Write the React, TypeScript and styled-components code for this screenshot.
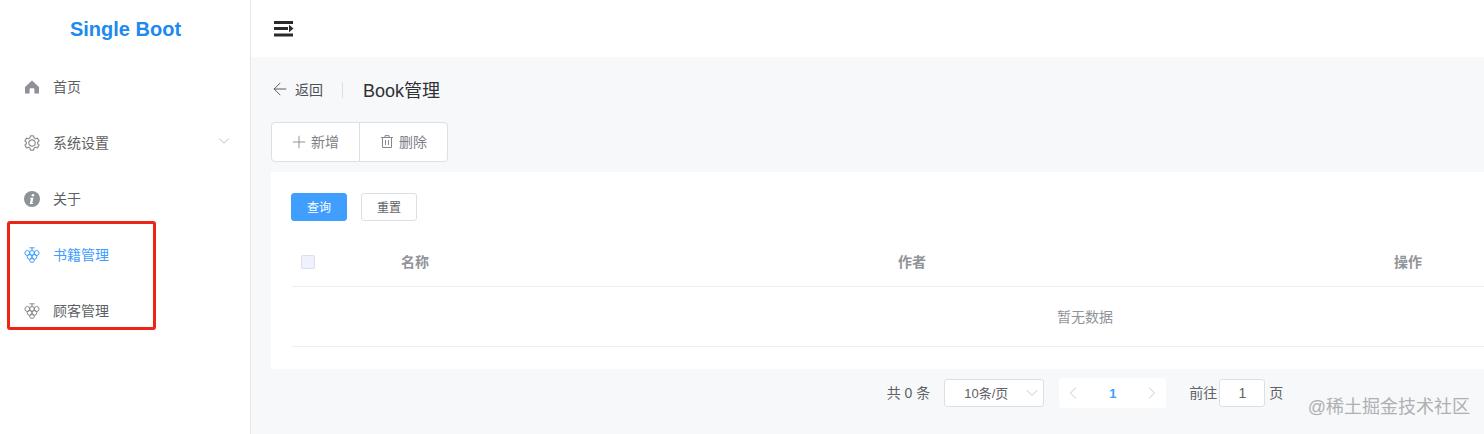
import React from 'react';
import styled, { createGlobalStyle } from 'styled-components';
import { ArrowLeft, ChevronDown, ChevronLeft, ChevronRight, Plus } from 'lucide-react';

const FONT = '"Liberation Sans", "Noto Sans CJK SC", sans-serif';

const GlobalStyle = createGlobalStyle`
  html, body {
    margin: 0;
    padding: 0;
    height: 434px;
    overflow: hidden;
    background: #fff;
    font-family: ${FONT};
  }
  * {
    box-sizing: border-box;
  }
`;

const Shell = styled.div`
  position: relative;
  display: flex;
  width: 1484px;
  height: 434px;
  overflow: hidden;
`;

const Sidebar = styled.aside`
  flex: none;
  width: 251px;
  height: 100%;
  background: #fff;
  border-right: 1px solid #e6e6e6;
`;

const Logo = styled.div`
  height: 59px;
  padding-left: 1px;
  display: flex;
  align-items: center;
  justify-content: center;
  color: #2089f0;
  font-size: 20px;
  font-weight: 700;
`;

const MenuItem = styled.div<{ $active?: boolean }>`
  height: 56px;
  padding: 0 20px 0 24px;
  display: flex;
  align-items: center;
  gap: 13px;
  font-size: 14px;
  color: ${props => (props.$active ? '#409eff' : '#5c5f64')};
`;

const MenuLabel = styled.span`
  flex: 1;
  padding-bottom: 2px;
`;

const MenuIcon = styled.svg`
  flex: none;
  width: 16px;
  height: 16px;
  display: block;
`;

const MenuArrow = styled(ChevronDown)`
  flex: none;
  margin: -5px -3px 0 0;
  color: #a9adb3;
`;

const Highlight = styled.div`
  position: absolute;
  left: 7px;
  top: 221px;
  width: 149px;
  height: 109px;
  border: 3px solid #ee2419;
  border-radius: 3px;
`;

const Main = styled.main`
  flex: 1;
  min-width: 0;
  display: flex;
  flex-direction: column;
  overflow: hidden;
  background: #f6f8f9;
`;

const TopBar = styled.header`
  flex: none;
  height: 57px;
  padding-left: 23px;
  display: flex;
  align-items: center;
  background: #fff;
`;

const Content = styled.div`
  width: 1648px;
  padding: 0 0 0 20px;
`;

const PageHeader = styled.div`
  height: 65px;
  margin-left: -1px;
  padding-bottom: 2px;
  display: flex;
  align-items: center;
`;

const BackLink = styled.div`
  display: flex;
  align-items: center;
  gap: 5px;
  font-size: 14px;
  color: #4d5056;
`;

const HeaderDivider = styled.span`
  width: 1px;
  height: 16px;
  margin: 2px 20px 0 19px;
  background: #dcdfe6;
`;

const PageTitle = styled.h1`
  margin: 0;
  font-size: 18px;
  font-weight: 400;
  color: #303133;
`;

const ButtonGroup = styled.div`
  display: inline-flex;
  vertical-align: top;
  height: 40px;
  background: #fff;
  border: 1px solid #dcdfe6;
  border-radius: 4px;
`;

const ToolButton = styled.div`
  height: 100%;
  padding: 0 20px 2px 21px;
  display: flex;
  align-items: center;
  gap: 6px;
  font-size: 14px;
  color: #7d8086;

  & + & {
    border-left: 1px solid #dcdfe6;
  }
`;

const PlusIcon = styled(Plus)`
  margin: 2px -4px 0 -4px;
`;

const ToolbarRow = styled.div`
  height: 50px;
`;

const Card = styled.section`
  width: 1628px;
  height: 197px;
  padding: 21px 21px 0;
  background: #fff;
`;

const SearchRow = styled.div`
  display: flex;
  gap: 14px;
  height: 47px;
  margin-left: -1px;
`;

const SmallButton = styled.div<{ $primary?: boolean }>`
  width: 56px;
  height: 28px;
  padding-bottom: 2px;
  display: flex;
  align-items: center;
  justify-content: center;
  border-radius: 3px;
  font-size: 12px;
  color: ${props => (props.$primary ? '#fff' : '#606266')};
  background: ${props => (props.$primary ? '#409eff' : '#fff')};
  border: 1px solid ${props => (props.$primary ? '#409eff' : '#dcdfe6')};
`;

const TableHead = styled.div`
  height: 47px;
  padding-bottom: 5px;
  display: grid;
  grid-template-columns: 109px 497px 496px 1fr;
  align-items: center;
  font-size: 14px;
  font-weight: 700;
  color: #909399;
  border-bottom: 1px solid #ebeef5;
`;

const CheckCell = styled.div`
  padding-left: 9px;
`;

const CheckBox = styled.span`
  display: block;
  width: 14px;
  height: 14px;
  margin-top: 3px;
  background: #edf2fc;
  border: 1px solid #dcdfe6;
  border-radius: 2px;
`;

const EmptyRow = styled.div`
  height: 60px;
  padding-bottom: 2px;
  display: flex;
  align-items: center;
  justify-content: center;
  font-size: 14px;
  font-weight: 400;
  color: #909399;
  border-bottom: 1px solid #ebeef5;
`;

const Pagination = styled.div`
  width: 1628px;
  height: 48px;
  display: flex;
  align-items: center;
  justify-content: center;
  font-size: 14px;
  color: #606266;
`;

const PagerText = styled.span`
  padding-bottom: 2px;
`;

const Total = styled(PagerText)`
  margin-right: 14px;
`;

const SizeSelect = styled.div`
  width: 100px;
  height: 28px;
  padding: 0 1px 0 19px;
  display: flex;
  align-items: center;
  justify-content: space-between;
  font-size: 13px;
  background: #fff;
  border: 1px solid #dcdfe6;
  border-radius: 3px;
`;

const Pager = styled.div`
  width: 107px;
  height: 30px;
  margin: 0 23px 0 15px;
  padding: 0 4px;
  display: flex;
  align-items: center;
  justify-content: space-between;
  font-size: 13px;
  background: #fff;
  border-radius: 3px;
  color: #c0c4cc;
`;

const PagerNumber = styled.span`
  font-weight: 700;
  color: #409eff;
`;

const JumpInput = styled.div`
  width: 46px;
  height: 28px;
  margin: 0 4px 0 2px;
  display: flex;
  align-items: center;
  justify-content: center;
  background: #fff;
  border: 1px solid #dcdfe6;
  border-radius: 3px;
`;

const Watermark = styled.div`
  position: absolute;
  right: 14px;
  top: 394px;
  font-size: 18px;
  line-height: 26px;
  color: #aeb0b3;
`;

const HomeIcon = () => (
  <MenuIcon viewBox="0 0 16 16">
    <path
      fill="#8e9199"
      fillRule="evenodd"
      d="M8 1.5 15 8v6.5h-4.6v-4.2a1 1 0 0 0-1-1H6.6a1 1 0 0 0-1 1v4.2H1V8z"
    />
  </MenuIcon>
);

const GearIcon = () => (
  <MenuIcon viewBox="0 0 16 16" fill="none" stroke="#8e9199" strokeWidth="1.2">
    <path d="M6.4.9h3.2l.5 2 1.4.8 2-.6 1.6 2.8-1.5 1.4v1.4l1.5 1.4-1.6 2.8-2-.6-1.4.8-.5 2H6.4l-.5-2-1.4-.8-2 .6-1.6-2.8 1.5-1.4V7.3L.9 5.9l1.6-2.8 2 .6 1.4-.8z" strokeLinejoin="round" />
    <circle cx="8" cy="8" r="3.2" />
  </MenuIcon>
);

const InfoIcon = () => (
  <MenuIcon viewBox="0 0 16 16">
    <circle cx="8" cy="8" r="8" fill="#8e9199" />
    <circle cx="8.9" cy="4.2" r="1.3" fill="#fff" />
    <path fill="#fff" d="M6.2 6.7h3.3l-1.2 5.2h1l-.3 1H5.7l1.2-5.2h-1z" />
  </MenuIcon>
);

const GrapeIcon = ({ color }: { color: string }) => (
  <MenuIcon viewBox="0 0 16 16" fill="none" stroke={color} strokeWidth="1">
    <path d="M5.5.8h5M8 .8v2.6" />
    <circle cx="3.4" cy="6" r="2.5" />
    <circle cx="8" cy="6" r="2.5" />
    <circle cx="12.6" cy="6" r="2.5" />
    <circle cx="5.7" cy="9.8" r="2.5" />
    <circle cx="10.3" cy="9.8" r="2.5" />
    <circle cx="8" cy="13.2" r="2.3" />
  </MenuIcon>
);

const CollapseIcon = () => (
  <svg width="20" height="16" viewBox="0 0 20 16" fill="#2b2b2b">
    <rect x="0" y="0" width="19" height="3" />
    <rect x="0" y="6" width="14" height="3" />
    <path d="M15 3.8 19.5 7.5 15 11.2z" />
    <rect x="0" y="12.5" width="19" height="3" />
  </svg>
);

const TrashIcon = () => (
  <svg width="12" height="13" viewBox="0 0 12 13" fill="none" stroke="#85888e" strokeWidth="1">
    <path d="M0 2.5h12M4 2.5V.6h4v1.9M1.5 2.5v10h9v-10M4.5 5v5M7.5 5v5" />
  </svg>
);

const menu = [
  { label: '首页', icon: <HomeIcon /> },
  { label: '系统设置', icon: <GearIcon />, arrow: true },
  { label: '关于', icon: <InfoIcon /> },
  { label: '书籍管理', icon: <GrapeIcon color="#409eff" />, active: true },
  { label: '顾客管理', icon: <GrapeIcon color="#85888e" /> },
];

export default function App() {
  return (
    <>
      <GlobalStyle />
      <Shell>
        <Sidebar>
          <Logo>Single Boot</Logo>
          {menu.map(item => (
            <MenuItem key={item.label} $active={item.active}>
              {item.icon}
              <MenuLabel>{item.label}</MenuLabel>
              {item.arrow && <MenuArrow size={18} strokeWidth={1} />}
            </MenuItem>
          ))}
        </Sidebar>
        <Main>
          <TopBar>
            <CollapseIcon />
          </TopBar>
          <Content>
            <PageHeader>
              <BackLink>
                <ArrowLeft size={20} strokeWidth={1.1} />
                返回
              </BackLink>
              <HeaderDivider />
              <PageTitle>Book管理</PageTitle>
            </PageHeader>
            <ToolbarRow>
              <ButtonGroup>
                <ToolButton>
                  <PlusIcon size={20} strokeWidth={1} />
                  新增
                </ToolButton>
                <ToolButton>
                  <TrashIcon />
                  删除
                </ToolButton>
              </ButtonGroup>
            </ToolbarRow>
            <Card>
              <SearchRow>
                <SmallButton $primary>查询</SmallButton>
                <SmallButton>重置</SmallButton>
              </SearchRow>
              <TableHead>
                <CheckCell>
                  <CheckBox />
                </CheckCell>
                <span>名称</span>
                <span>作者</span>
                <span>操作</span>
              </TableHead>
              <EmptyRow>暂无数据</EmptyRow>
            </Card>
            <Pagination>
              <Total>共 0 条</Total>
              <SizeSelect>
                <PagerText>10条/页</PagerText>
                <ChevronDown size={20} strokeWidth={0.9} color="#b4b8bf" />
              </SizeSelect>
              <Pager>
                <ChevronLeft size={20} strokeWidth={1.1} />
                <PagerNumber>1</PagerNumber>
                <ChevronRight size={20} strokeWidth={1.1} />
              </Pager>
              <PagerText>前往</PagerText>
              <JumpInput>1</JumpInput>
              <PagerText>页</PagerText>
            </Pagination>
          </Content>
        </Main>
        <Highlight />
        <Watermark>@稀土掘金技术社区</Watermark>
      </Shell>
    </>
  );
}
